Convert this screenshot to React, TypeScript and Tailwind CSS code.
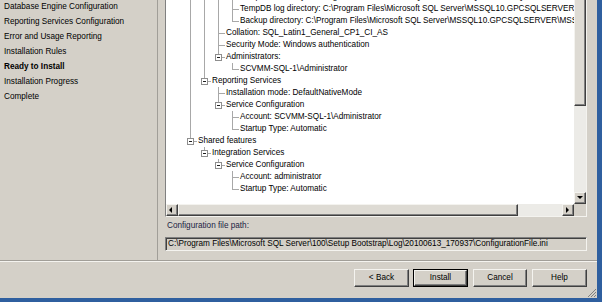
import React from 'react';

const navItems = [
  { label: 'Database Engine Configuration' },
  { label: 'Reporting Services Configuration' },
  { label: 'Error and Usage Reporting' },
  { label: 'Installation Rules' },
  { label: 'Ready to Install', active: true },
  { label: 'Installation Progress' },
  { label: 'Complete' },
];

type Row = { text: string; level: number; guides: number[]; last: boolean; box?: boolean };

const sqlPath = 'C:\\Program Files\\Microsoft SQL Server\\MSSQL10.GPCSQLSERVER\\MSSQL';

const rows: Row[] = [
  { text: `TempDB directory: ${sqlPath}\\Data`, level: 3, guides: [1, 1, 1], last: false },
  { text: `TempDB log directory: ${sqlPath}\\Data`, level: 3, guides: [1, 1, 1], last: false },
  { text: `Backup directory: ${sqlPath}\\Backup`, level: 3, guides: [1, 1, 1], last: true },
  { text: 'Collation: SQL_Latin1_General_CP1_CI_AS', level: 2, guides: [1, 1], last: false },
  { text: 'Security Mode: Windows authentication', level: 2, guides: [1, 1], last: false },
  { text: 'Administrators:', level: 2, guides: [1, 1], last: true, box: true },
  { text: 'SCVMM-SQL-1\\Administrator', level: 3, guides: [1, 1, 0], last: true },
  { text: 'Reporting Services', level: 1, guides: [1], last: true, box: true },
  { text: 'Installation mode: DefaultNativeMode', level: 2, guides: [1, 0], last: false },
  { text: 'Service Configuration', level: 2, guides: [1, 0], last: true, box: true },
  { text: 'Account: SCVMM-SQL-1\\Administrator', level: 3, guides: [1, 0, 0], last: false },
  { text: 'Startup Type: Automatic', level: 3, guides: [1, 0, 0], last: true },
  { text: 'Shared features', level: 0, guides: [], last: true, box: true },
  { text: 'Integration Services', level: 1, guides: [0], last: true, box: true },
  { text: 'Service Configuration', level: 2, guides: [0, 0], last: true, box: true },
  { text: 'Account: administrator', level: 3, guides: [0, 0, 0], last: false },
  { text: 'Startup Type: Automatic', level: 3, guides: [0, 0, 0], last: true },
];

const bevel =
  'border border-t-[#f4f3ef] border-l-[#f4f3ef] border-r-[#404040] border-b-[#404040] shadow-[inset_-1px_-1px_#808080]';

const Arrow: React.FC<{ dir: 'left' | 'right' | 'down' }> = ({ dir }) => {
  const pts = dir === 'left' ? '4,1 4,7 1,4' : dir === 'right' ? '2,1 2,7 5,4' : '1,2 7,2 4,5';
  return (
    <svg width="8" height="8" viewBox="0 0 8 8">
      <polygon points={pts} fill="#000" />
    </svg>
  );
};

const ScrollButton: React.FC<{ dir: 'left' | 'right' | 'down' }> = ({ dir }) => (
  <div className={`w-[12px] h-[12px] flex items-center justify-center bg-[#d4d0c8] ${bevel}`}>
    <Arrow dir={dir} />
  </div>
);

const TreeRow: React.FC<{ row: Row }> = ({ row }) => {
  const cols = [];
  for (let i = 0; i < row.level; i++) {
    cols.push(
      <div key={i} className="relative w-[14px] h-full shrink-0">
        {row.guides[i] ? <div className="absolute left-[7px] top-0 bottom-0 w-px bg-[#a8a8a8]" /> : null}
      </div>
    );
  }
  return (
    <div className="flex h-[12px] items-center whitespace-nowrap">
      {cols}
      <div className="relative w-[14px] h-full shrink-0">
        <div className={`absolute left-[7px] top-0 w-px bg-[#a8a8a8] ${row.last ? 'h-[6px]' : 'bottom-0'}`} />
        <div className="absolute left-[7px] top-[6px] w-[7px] h-px bg-[#a8a8a8]" />
        {row.box && (
          <div className="absolute left-[4px] top-[3px] w-[7px] h-[7px] border border-[#8e8e8e] bg-white flex items-center justify-center">
            <div className="w-[3px] h-px bg-[#202020]" />
          </div>
        )}
      </div>
      <span className="ml-px">{row.text}</span>
    </div>
  );
};

export default function App() {
  return (
    <div
      className="w-[602px] h-[302px] overflow-hidden bg-[#d4d0c8] border-r-[5px] border-b-[4px] border-[#2f5f9f] relative text-black text-[8.2px] leading-[12px]"
      style={{ fontFamily: '"Liberation Sans", Arial, sans-serif' }}
    >
      <div className="flex h-[260px]">
        {/* Left nav */}
        <div className="w-[158px] shrink-0 border-r border-[#a19e98] overflow-hidden">
          <div className="mt-[-1px] pl-[4px]">
            {navItems.map((item) => (
              <div key={item.label} className={`h-[15px] leading-[15px] whitespace-nowrap ${item.active ? 'font-bold' : ''}`}>
                {item.label}
              </div>
            ))}
          </div>
        </div>

        {/* Right content */}
        <div className="flex-1 pl-[7px] pr-[10px] flex flex-col">
          <div className="h-[218px] -mt-px border border-t-[#808080] border-l-[#808080] border-r-[#f4f3ef] border-b-[#f4f3ef] grid grid-cols-[1fr_12px] grid-rows-[1fr_12px]">
            <div className="bg-white overflow-hidden">
              <div className="mt-[-9px] pl-[17px]">
                {rows.map((r, i) => (
                  <TreeRow key={i} row={r} />
                ))}
              </div>
            </div>
            {/* vertical scrollbar */}
            <div className="flex flex-col bg-[#ecebe7]">
              <div className={`h-[106px] bg-[#dedbd4] ${bevel} border-t-0`} />
              <div className="flex-1" />
              <ScrollButton dir="down" />
            </div>
            {/* horizontal scrollbar */}
            <div className="flex bg-[#ecebe7]">
              <ScrollButton dir="left" />
              <div className={`w-[340px] h-[12px] bg-[#dedbd4] ${bevel}`} />
              <div className="flex-1" />
              <ScrollButton dir="right" />
            </div>
            <div className="bg-[#d4d0c8]" />
          </div>

          <div className="mt-[3px] pl-[2px] h-[12px] text-[#1b2444]">Configuration file path:</div>
          <div className="mt-[5px] h-[14px] border border-t-[#808080] border-l-[#808080] border-r-[#f4f3ef] border-b-[#f4f3ef] shadow-[inset_1px_1px_#404040] pl-[2px] leading-[12px] whitespace-nowrap overflow-hidden">
            C:\Program Files\Microsoft SQL Server\100\Setup Bootstrap\Log\20100613_170937\ConfigurationFile.ini
          </div>
        </div>
      </div>

      <div className="h-px bg-[#a19e98]" />
      <div className="h-px bg-[#f4f3ef]" />

      <div className="flex justify-end pr-[10px] pt-[7px] gap-[4px]">
        <button className={`w-[55px] h-[18px] bg-[#d4d0c8] ${bevel}`}>&lt; Back</button>
        <button className="w-[55px] h-[18px] border border-black">
          <div className={`w-full h-full flex items-center justify-center bg-[#d4d0c8] ${bevel}`}>Install</div>
        </button>
        <button className={`w-[54px] h-[18px] ml-[1px] bg-[#d4d0c8] ${bevel}`}>Cancel</button>
        <button className={`w-[55px] h-[18px] ml-[1px] bg-[#d4d0c8] ${bevel}`}>Help</button>
      </div>

      {/* size grip */}
      <svg className="absolute right-0 bottom-0" width="10" height="10" viewBox="0 0 10 10">
        <line x1="9" y1="1" x2="1" y2="9" stroke="#808080" />
        <line x1="9" y1="4" x2="4" y2="9" stroke="#808080" />
        <line x1="9" y1="7" x2="7" y2="9" stroke="#808080" />
      </svg>
    </div>
  );
}
